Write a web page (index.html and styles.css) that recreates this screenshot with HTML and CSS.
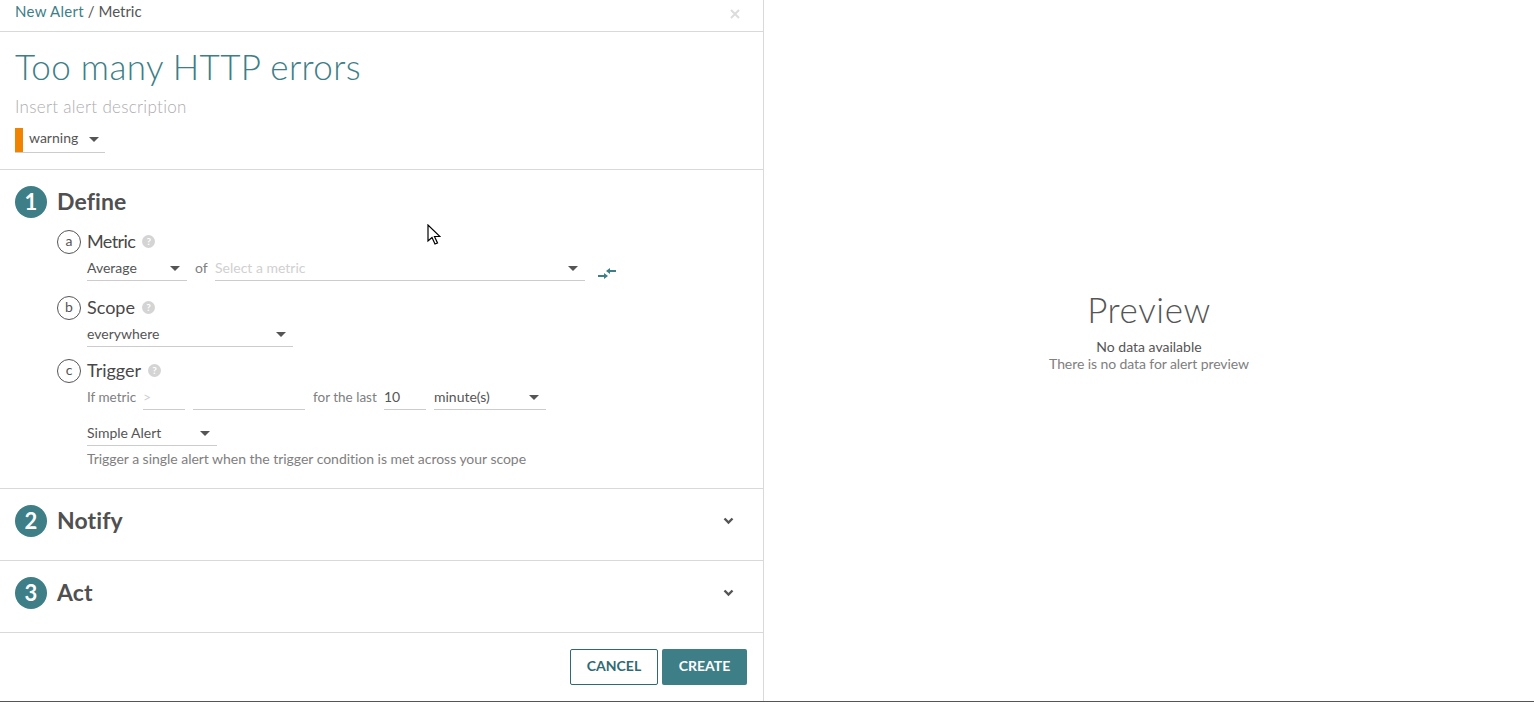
FILE: index.html
```html
<!DOCTYPE html>
<html lang="en">
<head>
  <meta charset="UTF-8" />
  <title>New Alert</title>
  <link rel="stylesheet" href="styles.css">
</head>
<body>
  <div class="page">
    <div class="editor">
      <div class="topbar">
        <div class="crumbs"><a>New Alert</a> / Metric</div>
        <svg class="close" width="10" height="10" viewBox="0 0 10 10"><path d="M1 1l8 8M9 1l-8 8" stroke="#dcdcdc" stroke-width="2" fill="none"/></svg>
      </div>

      <div class="title-block">
        <h1>Too many HTTP errors</h1>
        <div class="desc">Insert alert description</div>
        <div class="severity">
          <span class="sev-mark"></span>
          <span class="sev-label">warning</span>
          <span class="caret"></span>
        </div>
      </div>

      <div class="section define">
        <div class="section-head">
          <span class="step">1</span>
          <h2>Define</h2>
        </div>

        <div class="sub-head">
          <span class="letter">a</span>
          <span class="sub-title tight">Metric</span>
          <span class="help">?</span>
        </div>
        <div class="row row-metric">
          <div class="select w-100"><span>Average</span><span class="caret"></span></div>
          <span class="word word-of">of</span>
          <div class="select w-370 empty"><span>Select a metric</span><span class="caret"></span></div>
          <svg class="swap" width="18" height="11" viewBox="0 0 18 11">
            <path d="M10 3h8M0 8h7" stroke="#3d7e87" stroke-width="2" fill="none"/>
            <path d="M12 0v6l-4-3zM6 5v6l4-3z" fill="#3d7e87"/>
          </svg>
        </div>

        <div class="sub-head">
          <span class="letter">b</span>
          <span class="sub-title">Scope</span>
          <span class="help">?</span>
        </div>
        <div class="row row-scope">
          <div class="select w-206"><span>everywhere</span><span class="caret"></span></div>
        </div>

        <div class="sub-head">
          <span class="letter">c</span>
          <span class="sub-title">Trigger</span>
          <span class="help">?</span>
        </div>
        <div class="row row-trigger">
          <span class="word word-if">If metric</span>
          <div class="select w-42 empty"><span>&gt;</span></div>
          <div class="select w-112"></div>
          <span class="word word-last">for the last</span>
          <div class="select w-42"><span>10</span></div>
          <div class="select w-112"><span>minute(s)</span><span class="caret"></span></div>
        </div>
        <div class="row row-type">
          <div class="select w-130"><span>Simple Alert</span><span class="caret"></span></div>
        </div>
        <div class="hint">Trigger a single alert when the trigger condition is met across your scope</div>
      </div>

      <div class="section collapsed">
        <div class="section-head">
          <span class="step">2</span>
          <h2>Notify</h2>
          <svg class="chevron" width="11" height="8" viewBox="0 0 11 8"><path d="M1.500 1.500l4 4 4-4" stroke="#555" stroke-width="2.400" fill="none"/></svg>
        </div>
      </div>

      <div class="section collapsed">
        <div class="section-head">
          <span class="step">3</span>
          <h2>Act</h2>
          <svg class="chevron" width="11" height="8" viewBox="0 0 11 8"><path d="M1.500 1.500l4 4 4-4" stroke="#555" stroke-width="2.400" fill="none"/></svg>
        </div>
      </div>

      <div class="actions">
        <button class="btn btn-cancel">CANCEL</button>
        <button class="btn btn-create">CREATE</button>
      </div>
    </div>

    <div class="preview">
      <div class="preview-title">Preview</div>
      <div class="preview-main">No data available</div>
      <div class="preview-sub">There is no data for alert preview</div>
    </div>
  </div>

  <!-- mouse pointer captured in the screenshot -->
  <svg class="cursor" width="14" height="22" viewBox="0 0 14 22">
    <path d="M1 1v16l4-3.500 3 6.500 2.500-1-3-6.500h5.500z" fill="#fff" stroke="#000" stroke-width="1.200"/>
  </svg>
</body>
</html>
```

FILE: styles.css
```css
* {
  box-sizing: border-box;
}
body {
  margin: 0;
  height: 702px;
  overflow: hidden;
  background: #fff;
  font-family: Lato, 'Open Sans', sans-serif;
  color: #555;
}
.page {
  display: flex;
  height: 702px;
  border-bottom: 1px solid #555;
}
.editor {
  width: 764px;
  border-right: 1px solid #d9d9d9;
  display: flex;
  flex-direction: column;
}

/* top bar */
.topbar {
  height: 32px;
  padding: 2px 23px 0 15px;
  border-bottom: 1px solid #d9d9d9;
  display: flex;
  justify-content: space-between;
}
.crumbs {
  font-size: 15px;
  line-height: 18px;
}
.crumbs a {
  color: #3d7e87;
  letter-spacing: 0.3px;
}
.close {
  margin-top: 7px;
}

/* title */
.title-block {
  height: 138px;
  padding: 0 15px;
  border-bottom: 1px solid #d9d9d9;
}
h1 {
  margin: 13px 0 0;
  font-size: 35px;
  line-height: 42px;
  font-weight: 300;
  letter-spacing: 0.35px;
  color: #3d7e87;
}
.desc {
  margin-top: 10px;
  font-size: 17px;
  line-height: 20px;
  font-weight: 300;
  letter-spacing: 0.3px;
  color: #adadad;
}
.severity {
  margin-top: 11px;
  width: 90px;
  height: 25px;
  border-bottom: 1px solid #ccc;
  display: flex;
  align-items: flex-start;
  font-size: 14px;
  line-height: 20px;
}
.sev-mark {
  width: 8px;
  height: 24px;
  background: #f08300;
  margin-right: 6px;
}
.sev-label {
  margin-right: 11px;
}
.severity .caret {
  margin-top: 9px;
}
.caret {
  width: 0;
  height: 0;
  border-left: 5.500px solid transparent;
  border-right: 5.500px solid transparent;
  border-top: 5px solid #555;
}

/* sections */
.section {
  border-bottom: 1px solid #d9d9d9;
  padding: 0 15px;
}
.define {
  height: 319px;
  padding-top: 16px;
}
.collapsed {
  height: 72px;
  padding-top: 16px;
}
.section-head {
  display: flex;
  align-items: center;
  height: 32px;
}
.step {
  width: 32px;
  height: 32px;
  border-radius: 50%;
  background: #3d7e87;
  color: #fff;
  font-size: 22px;
  font-weight: 700;
  line-height: 32px;
  text-align: center;
  margin-right: 10px;
}
h2 {
  margin: 0;
  padding-bottom: 2px;
  font-size: 23px;
  font-weight: 700;
  line-height: 30px;
  letter-spacing: 0.1px;
  color: #505050;
  flex: 1;
}
.chevron {
  margin-right: 14px;
}

.sub-head {
  display: flex;
  align-items: center;
  height: 24px;
  margin-left: 42px;
}
.define .section-head + .sub-head {
  margin-top: 12px;
}
.letter {
  width: 24px;
  height: 24px;
  border: 1px solid #555;
  border-radius: 50%;
  font-size: 14px;
  line-height: 20px;
  text-align: center;
  margin-right: 6px;
}
.sub-title {
  padding-bottom: 2px;
  font-size: 18px;
  color: #484848;
}
.tight {
  letter-spacing: -0.6px;
}
.help {
  width: 13px;
  height: 13px;
  margin: 0 0 1px 7px;
  border-radius: 50%;
  background: #d4d4d4;
  color: #fff;
  font-size: 10px;
  font-weight: 700;
  line-height: 13px;
  text-align: center;
}

.row {
  display: flex;
  align-items: flex-end;
  margin-left: 72px;
  font-size: 14px;
}
.row-metric {
  margin-bottom: 15px;
}
.row-scope {
  margin-bottom: 12px;
}
.row-trigger {
  gap: 8px;
}
.row-type {
  margin-top: 9px;
}
.select {
  height: 27px;
  padding: 2px 7px 0 0;
  border-bottom: 1px solid #ccc;
  display: flex;
  justify-content: space-between;
  align-items: center;
  line-height: 20px;
  color: #555;
}
.empty {
  color: #d0d0d0;
}
.word {
  height: 27px;
  line-height: 28px;
  white-space: nowrap;
  color: #808080;
}
.word-of {
  width: 12px;
  margin: 0 8px;
}
.word-if {
  width: 48px;
  font-size: 13.500px;
}
.word-last {
  width: 63px;
  font-size: 13.500px;
}
.swap {
  margin: 0 0 2px 13px;
}
.w-100 { width: 100px; }
.w-370 { width: 370px; }
.w-206 { width: 206px; }
.w-42 { width: 42px; }
.w-112 { width: 112px; }
.w-130 { width: 130px; }
.hint {
  margin: 4px 0 0 72px;
  font-size: 14px;
  line-height: 17px;
  letter-spacing: -0.03px;
  color: #808080;
}

/* footer buttons */
.actions {
  flex: 1;
  display: flex;
  justify-content: flex-end;
  gap: 4px;
  padding: 16px 16px 0 0;
}
.btn {
  height: 36px;
  padding: 0 0 3px;
  border-radius: 2px;
  font-family: Lato, sans-serif;
  font-size: 14px;
  font-weight: 700;
}
.btn-cancel {
  width: 88px;
  background: #fff;
  border: 1px solid #2f6a73;
  color: #2f6a73;
}
.btn-create {
  width: 85px;
  background: #3d7e87;
  border: 0;
  color: #fff;
}

/* preview pane */
.preview {
  flex: 1;
  padding-top: 288px;
  text-align: center;
}
.preview-title {
  font-size: 35px;
  line-height: 42px;
  font-weight: 300;
  letter-spacing: 0.6px;
  color: #555;
}
.preview-main {
  margin-top: 8px;
  font-size: 14px;
  line-height: 17px;
}
.preview-sub {
  font-size: 14px;
  line-height: 17px;
  letter-spacing: -0.09px;
  color: #808080;
}

.cursor {
  position: absolute;
  left: 427px;
  top: 224px;
}
```
